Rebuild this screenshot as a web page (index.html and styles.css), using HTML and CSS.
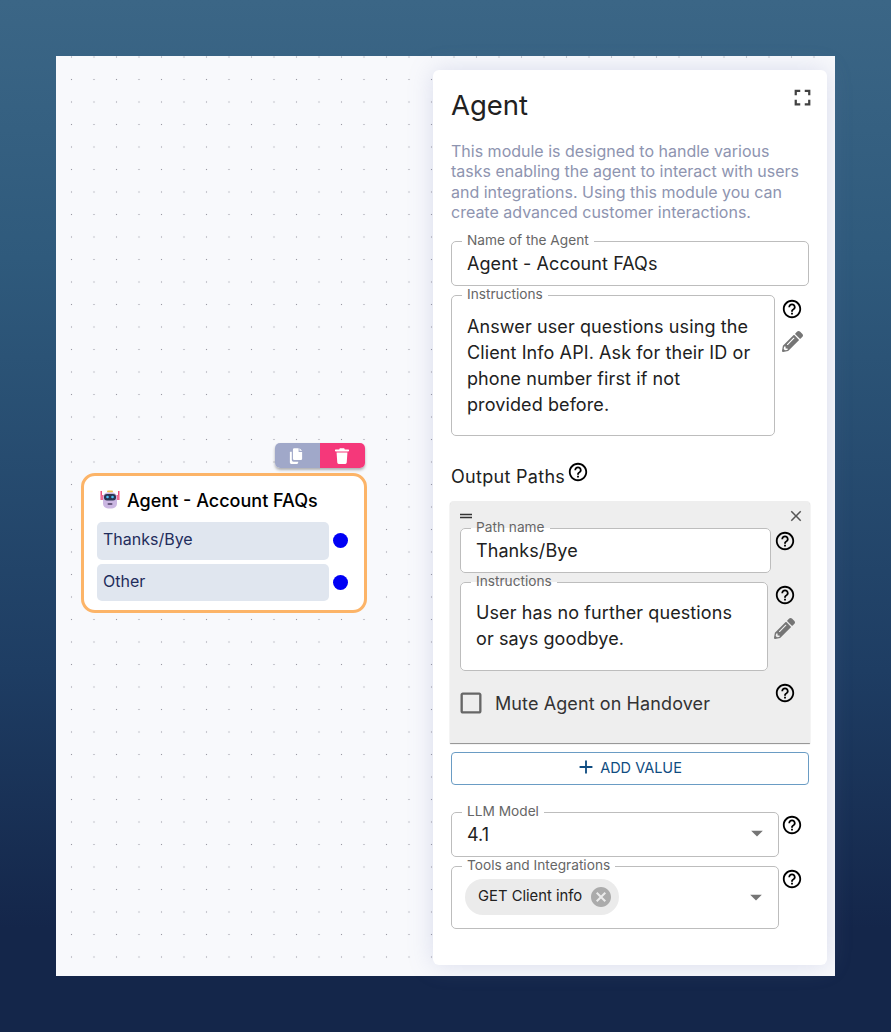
FILE: index.html
```html
<!DOCTYPE html>
<html lang="en">
<head>
    <meta charset="UTF-8">
    <meta name="viewport" content="width=device-width, initial-scale=1.0">
    <title>Agent</title>
    <link rel="stylesheet" href="styles.css">
</head>
<body>
    <svg class="sprites" width="0" height="0">
        <symbol id="i-help" viewBox="0 0 24 24"><path d="M11 18h2v-2h-2v2zm1-16C6.480 2 2 6.480 2 12s4.480 10 10 10 10-4.480 10-10S17.520 2 12 2zm0 18c-4.410 0-8-3.590-8-8s3.590-8 8-8 8 3.590 8 8-3.590 8-8 8zm0-14c-2.210 0-4 1.790-4 4h2c0-1.100.9-2 2-2s2 .9 2 2c0 2-3 1.750-3 5h2c0-2.250 3-2.500 3-5 0-2.210-1.790-4-4-4z"/></symbol>
        <symbol id="i-pencil" viewBox="0 0 512 512"><path d="M497.900 142.100l-46.100 46.100c-4.700 4.700-12.300 4.700-17 0l-111-111c-4.700-4.700-4.700-12.300 0-17l46.100-46.100c18.700-18.700 49.100-18.700 67.900 0l60.100 60.100c18.800 18.700 18.800 49.100 0 67.900zM284.200 99.800L21.600 362.400.4 483.900c-2.900 16.400 11.400 30.600 27.800 27.800l121.500-21.300 262.600-262.600c4.700-4.700 4.700-12.300 0-17l-111-111c-4.800-4.700-12.400-4.700-17.100 0zM124.100 339.900c-5.500-5.500-5.500-14.300 0-19.800l154-154c5.500-5.500 14.300-5.500 19.800 0s5.500 14.300 0 19.800l-154 154c-5.500 5.500-14.300 5.500-19.800 0zM88 424h48v36.300l-64.500 11.300-31.100-31.100L51.700 376H88v48z"/></symbol>
        <symbol id="i-caret" viewBox="0 0 24 24"><path d="M7 10l5 5 5-5z"/></symbol>
    </svg>

    <div class="canvas">
        <!-- node on the flow canvas -->
        <div class="node-wrap">
            <div class="node-tools">
                <button class="tool tool-copy" aria-label="Copy">
                    <svg viewBox="0 0 16 18" width="14" height="16"><path fill="#fff" d="M6 0h5v4.500h4V12a1.500 1.500 0 0 1-1.500 1.500H6A1.500 1.500 0 0 1 4.500 12V1.500A1.500 1.500 0 0 1 6 0zM12 0l3 3h-3zM1.500 4H3.200v9.500A2 2 0 0 0 5.200 15.500H10.500V16.500A1.500 1.500 0 0 1 9 18H2.500A1.500 1.500 0 0 1 1 16.500V4.500A.5.5 0 0 1 1.500 4z"/></svg>
                </button>
                <button class="tool tool-delete" aria-label="Delete">
                    <svg viewBox="0 0 16 18" width="14" height="16"><path fill="#fff" d="M5.500 0h5l.7 1.500H15a1 1 0 0 1 0 2.300H1a1 1 0 0 1 0-2.300h3.800zM1.800 5h12.400l-.8 11.500A1.600 1.600 0 0 1 11.800 18H4.200a1.600 1.600 0 0 1-1.600-1.500z"/></svg>
                </button>
            </div>
            <div class="node">
                <div class="node-title">
                    <svg class="node-bot" viewBox="0 0 20 20" width="20" height="20">
                        <rect x="7" y="0.500" width="6" height="2" rx="1" fill="#f2c14e"/>
                        <rect x="0.500" y="1" width="1.500" height="9" fill="#ef4f7c"/>
                        <rect x="18" y="1" width="1.500" height="9" fill="#ef4f7c"/>
                        <rect x="1" y="5" width="3" height="5" rx="1" fill="#ef6d93"/>
                        <rect x="16" y="5" width="3" height="5" rx="1" fill="#ef6d93"/>
                        <rect x="3" y="2.500" width="14" height="16" rx="5" fill="#cbb7e2"/>
                        <rect x="4" y="4" width="12" height="6.500" rx="3" fill="#2c3550"/>
                        <circle cx="7.500" cy="7" r="1.300" fill="#4fc3f7"/>
                        <circle cx="12.500" cy="7" r="1.300" fill="#4fc3f7"/>
                        <rect x="7.500" y="13" width="5" height="2" rx="1" fill="#6a5a80"/>
                    </svg>
                    Agent - Account FAQs
                </div>
                <div class="node-row">
                    <div class="node-path">Thanks/Bye</div>
                    <span class="node-port"></span>
                </div>
                <div class="node-row">
                    <div class="node-path">Other</div>
                    <span class="node-port"></span>
                </div>
            </div>
        </div>

        <!-- settings panel -->
        <div class="panel">
            <svg class="icon expand" viewBox="0 0 24 24" width="27" height="27"><path d="M7 14H5v5h5v-2H7v-3zm-2-4h2V7h3V5H5v5zm12 7h-3v2h5v-5h-2v3zM14 5v2h3v3h2V5h-5z"/></svg>
            <h2 class="panel-title">Agent</h2>
            <p class="panel-desc">This module is designed to handle various tasks enabling the agent to interact with users and integrations. Using this module you can create advanced customer interactions.</p>

            <fieldset class="field field-name">
                <legend>Name of the Agent</legend>
                <div class="field-value">Agent - Account FAQs</div>
            </fieldset>

            <div class="field-row">
                <fieldset class="field field-instructions">
                    <legend>Instructions</legend>
                    <div class="field-text">Answer user questions using the Client Info API. Ask for their ID or phone number first if not provided before.</div>
                </fieldset>
                <div class="field-side side-instructions">
                    <svg class="icon help"><use href="#i-help"/></svg>
                    <svg class="icon pencil"><use href="#i-pencil"/></svg>
                </div>
            </div>

            <div class="section-title">
                Output Paths
                <svg class="icon help"><use href="#i-help"/></svg>
            </div>

            <div class="path-card">
                <div class="path-head">
                    <svg class="icon drag" viewBox="0 0 24 24" width="18" height="18"><path d="M20 9H4v2h16V9zM4 15h16v-2H4v2z"/></svg>
                    <svg class="icon close" viewBox="0 0 24 24" width="18" height="18"><path d="M19 6.410 17.590 5 12 10.590 6.410 5 5 6.410 10.590 12 5 17.590 6.410 19 12 13.410 17.590 19 19 17.590 13.410 12z"/></svg>
                </div>
                <div class="field-row">
                    <fieldset class="field field-path">
                        <legend>Path name</legend>
                        <div class="field-value">Thanks/Bye</div>
                    </fieldset>
                    <div class="field-side side-path">
                        <svg class="icon help"><use href="#i-help"/></svg>
                    </div>
                </div>
                <div class="field-row">
                    <fieldset class="field field-path-text">
                        <legend>Instructions</legend>
                        <div class="field-text">User has no further questions or says goodbye.</div>
                    </fieldset>
                    <div class="field-side side-path-text">
                        <svg class="icon help"><use href="#i-help"/></svg>
                        <svg class="icon pencil"><use href="#i-pencil"/></svg>
                    </div>
                </div>
                <div class="mute-row">
                    <svg class="icon checkbox" viewBox="0 0 24 24" width="28" height="28"><path d="M19 5v14H5V5h14m0-2H5c-1.100 0-2 .9-2 2v14c0 1.100.9 2 2 2h14c1.100 0 2-.9 2-2V5c0-1.100-.9-2-2-2z"/></svg>
                    <span class="mute-label">Mute Agent on Handover</span>
                    <svg class="icon help"><use href="#i-help"/></svg>
                </div>
            </div>

            <button class="add-btn">
                <svg class="icon" viewBox="0 0 24 24" width="22" height="22"><path d="M19 13h-6v6h-2v-6H5v-2h6V5h2v6h6v2z"/></svg>
                ADD VALUE
            </button>

            <div class="field-row row-llm">
                <fieldset class="field field-select">
                    <legend>LLM Model</legend>
                    <div class="select-body">
                        <div class="field-value">4.1</div>
                        <svg class="icon caret"><use href="#i-caret"/></svg>
                    </div>
                </fieldset>
                <div class="field-side side-select">
                    <svg class="icon help"><use href="#i-help"/></svg>
                </div>
            </div>

            <div class="field-row">
                <fieldset class="field field-tools">
                    <legend>Tools and Integrations</legend>
                    <div class="select-body">
                        <span class="chip">
                            <span class="chip-label">GET Client info</span>
                            <svg class="icon chip-x" viewBox="0 0 24 24" width="24" height="24"><path d="M12 2C6.470 2 2 6.470 2 12s4.470 10 10 10 10-4.470 10-10S17.530 2 12 2zm5 13.590L15.590 17 12 13.410 8.410 17 7 15.590 10.590 12 7 8.410 8.410 7 12 10.590 15.590 7 17 8.410 13.410 12 17 15.590z"/></svg>
                        </span>
                        <svg class="icon caret"><use href="#i-caret"/></svg>
                    </div>
                </fieldset>
                <div class="field-side side-select side-tools">
                    <svg class="icon help"><use href="#i-help"/></svg>
                </div>
            </div>
        </div>
    </div>
</body>
</html>
```

FILE: styles.css
```css
/* Page and canvas */
html, body {
    height: 100%;
}

body {
    margin: 0;
    padding: 56px;
    box-sizing: border-box;
    height: 1032px;
    overflow: hidden;
    font-family: 'Inter', sans-serif;
    color: #212121;
    background: linear-gradient(180deg, #3b6686 0%, #2f5a7c 25%, #1e3d63 65%, #14264a 90%, #14264a 100%);
}

.sprites {
    position: absolute;
}

.canvas {
    position: relative;
    height: 920px;
    background-color: #f8f9fc;
    background-image: radial-gradient(circle, #9a9aa5 0.6px, transparent 1px);
    background-size: 22.5px 22.5px;
    background-position: 4.250px -10.250px;
}

/* Node */
.node-wrap {
    position: absolute;
    left: 25px;
    top: 387px;
    width: 286px;
    display: flex;
    flex-direction: column;
    align-items: flex-end;
}

.node-tools {
    display: flex;
    margin-right: 2px;
    margin-bottom: 5px;
    border-radius: 5px;
    overflow: hidden;
    box-shadow: 0 2px 3px rgba(0, 0, 0, 0.3);
}

.tool {
    width: 45px;
    height: 25px;
    border: none;
    padding: 0;
    display: flex;
    align-items: center;
    justify-content: center;
}

.tool-copy {
    padding-right: 4px;
    background-color: #a0a8c9;
}

.tool-delete {
    padding-right: 2px;
    background-color: #f5387a;
}

.node {
    width: 100%;
    height: 140px;
    box-sizing: border-box;
    padding: 13px 0 13px 13px;
    background-color: #fff;
    border: 3px solid #fcb468;
    border-radius: 14px;
}

.node-title {
    display: flex;
    align-items: center;
    gap: 7px;
    height: 22px;
    margin-bottom: 11px;
    font-size: 18px;
    font-weight: 500;
    color: #000;
}

.node-bot {
    margin-left: 3px;
    flex-shrink: 0;
}

.node-row {
    display: flex;
    align-items: center;
    gap: 4px;
    margin-bottom: 4px;
}

.node-path {
    width: 232px;
    height: 37.500px;
    box-sizing: border-box;
    padding: 7px 6px;
    background-color: #e0e6ef;
    border-radius: 5px;
    font-size: 16px;
    line-height: 20px;
    color: #1f2d5c;
}

.node-port {
    width: 15px;
    height: 15px;
    border-radius: 50%;
    background-color: #0000f5;
}

/* Settings panel */
.panel {
    position: absolute;
    left: 377px;
    top: 14px;
    width: 394px;
    height: 895px;
    box-sizing: border-box;
    padding: 0 18px;
    background-color: #fff;
    border-radius: 6px;
    box-shadow: 0 0 24px rgba(130, 140, 190, 0.25);
}

.icon {
    display: block;
    flex-shrink: 0;
    fill: #000;
}

.help {
    width: 22px;
    height: 22px;
}

.pencil {
    width: 21px;
    height: 21px;
    fill: #757575;
}

.expand {
    position: absolute;
    top: 14px;
    right: 11px;
    fill: #424242;
}

.panel-title {
    margin: 0;
    padding-top: 17px;
    font-size: 27.500px;
    font-weight: 400;
    line-height: 36px;
    color: #212121;
}

.panel-desc {
    margin: 18px 0 0;
    font-size: 16px;
    line-height: 20.300px;
    color: #8e94b0;
}

/* Outlined fields */
.field {
    flex-shrink: 0;
    margin: 0;
    padding: 0 15px;
    min-width: 0;
    box-sizing: border-box;
    background-color: #fff;
    border: 1px solid #bdbdbd;
    border-radius: 5px;
}

.field legend {
    position: relative;
    top: -1px;
    margin-left: -5px;
    padding: 0 5px;
    font-size: 13.700px;
    line-height: 16px;
    color: #666;
}

.field-value {
    padding-top: 3px;
    font-size: 18px;
    letter-spacing: 0.08px;
    line-height: 24px;
    color: #212121;
}

.field-text {
    font-size: 18px;
    letter-spacing: 0.1px;
    line-height: 26px;
    color: #212121;
}

.field-row {
    display: flex;
    align-items: flex-start;
}

.field-side {
    display: flex;
    flex-direction: column;
    align-items: center;
    width: 34px;
}

.field-name {
    width: 358px;
    height: 53px;
    margin-top: 11px;
}

.field-instructions {
    width: 324px;
    height: 149px;
    margin-top: 1px;
    padding: 11px 22px 0 15px;
}

.side-instructions {
    padding-top: 12px;
    gap: 11px;
}

.section-title {
    display: flex;
    align-items: flex-start;
    gap: 2px;
    margin-top: 29px;
    font-size: 18px;
    letter-spacing: 0.3px;
    line-height: 24px;
    color: #212121;
}

.section-title .help {
    margin-top: -4px;
}

/* Output path card */
.path-card {
    width: 360px;
    height: 242px;
    margin: 12px 0 0 -1px;
    box-sizing: border-box;
    padding: 0 10px;
    background-color: #eeeeee;
    border-radius: 4px 4px 0 0;
    box-shadow: 0 1px 1px rgba(0, 0, 0, 0.45);
}

.path-head {
    display: flex;
    justify-content: space-between;
    height: 13px;
    padding-top: 6px;
    margin: 0 -5px 0 -3px;
}

.drag {
    fill: #333;
}

.close {
    fill: #555;
}

.field-path {
    width: 311px;
    height: 53px;
}

.side-path {
    width: 28px;
    padding-top: 10px;
}

.field-path-text {
    width: 308px;
    height: 97px;
    margin-top: 1px;
    padding: 10px 30px 0 15px;
}

.side-path-text {
    padding: 11px 0 0 1px;
    gap: 12px;
}

.mute-row {
    display: flex;
    align-items: center;
    height: 44px;
    margin: 10px 0 0 -3px;
}

.checkbox {
    fill: #666;
}

.mute-label {
    margin-left: 10px;
    font-size: 18px;
    letter-spacing: 0.1px;
    color: #333;
}

.mute-row .help {
    margin: -20px 4px 0 auto;
}

.add-btn {
    display: flex;
    align-items: center;
    justify-content: center;
    gap: 3px;
    width: 358px;
    height: 33px;
    margin-top: 9px;
    padding: 0 3px 3px 0;
    background-color: #fff;
    border: 1px solid #6a9cc4;
    border-radius: 4px;
    font-family: 'Inter', sans-serif;
    font-size: 14.500px;
    font-weight: 400;
    color: #0f4c81;
}

.add-btn .icon {
    fill: #0f4c81;
}

/* Selects */
.row-llm {
    margin-top: 19px;
}

.field-select {
    width: 328px;
    height: 53px;
}

.side-select {
    width: 26px;
    padding-top: 10px;
}

.side-tools {
    padding-top: 11px;
}

.select-body {
    position: relative;
    display: flex;
    align-items: center;
}

.caret {
    position: absolute;
    right: -8px;
    top: -1px;
    width: 28px;
    height: 28px;
    fill: #757575;
}

.field-tools {
    width: 328px;
    height: 71px;
    margin-top: 1px;
    padding: 5px 13px;
}

.field-tools legend {
    margin-left: -3px;
}

.field-tools .caret {
    top: 4px;
    right: -5px;
}

.chip {
    display: flex;
    align-items: center;
    gap: 7px;
    height: 36px;
    padding: 0 6px 0 13px;
    background-color: #ebebeb;
    border-radius: 18px;
    font-size: 14.800px;
    color: #212121;
}

.chip-label {
    padding-bottom: 3px;
}

.chip-x {
    fill: #ababab;
}
```
